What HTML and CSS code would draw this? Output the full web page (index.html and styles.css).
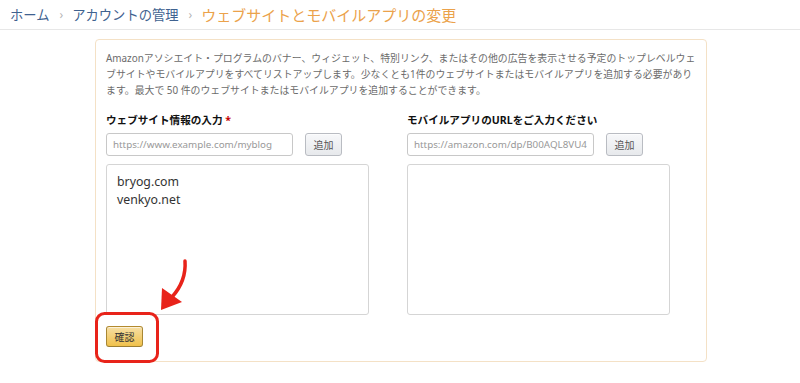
FILE: index.html
```html
<!DOCTYPE html>
<html lang="ja">
<head>
    <meta charset="UTF-8">
    <meta name="viewport" content="width=device-width, initial-scale=1.0">
    <title>ウェブサイトとモバイルアプリの変更</title>
    <link rel="stylesheet" href="styles.css">
</head>
<body>

<div class="breadcrumb">
    <a class="crumb" href="#">ホーム</a>
    <span class="sep">›</span>
    <a class="crumb" href="#">アカウントの管理</a>
    <span class="sep">›</span>
    <span class="crumb current">ウェブサイトとモバイルアプリの変更</span>
</div>

<div class="panel">
    <p class="desc">Amazonアソシエイト・プログラムのバナー、ウィジェット、特別リンク、またはその他の広告を表示させる予定のトップレベルウェブサイトやモバイルアプリをすべてリストアップします。少なくとも1件のウェブサイトまたはモバイルアプリを追加する必要があります。最大で 50 件のウェブサイトまたはモバイルアプリを追加することができます。</p>

    <div class="columns">
        <div class="column">
            <div class="label">ウェブサイト情報の入力 <span class="req">*</span></div>
            <div class="add-row">
                <input type="text" class="url-input" placeholder="https://www.example.com/myblog">
                <button class="btn">追加</button>
            </div>
            <div class="site-list">
                <div class="site">bryog.com</div>
                <div class="site">venkyo.net</div>
            </div>
        </div>
        <div class="column">
            <div class="label">モバイルアプリのURLをご入力ください</div>
            <div class="add-row">
                <input type="text" class="url-input" placeholder="https://amazon.com/dp/B00AQL8VU4">
                <button class="btn">追加</button>
            </div>
            <div class="site-list"></div>
        </div>
    </div>

    <button class="btn btn-primary">確認</button>
</div>

<!-- annotation drawn over the page -->
<svg class="annotation" width="800" height="383" viewBox="0 0 800 383">
    <rect x="96.5" y="313.5" width="61" height="48" rx="8" fill="none" stroke="#e8231a" stroke-width="3"/>
    <path d="M185 261 C186 275 181 287 172 297" fill="none" stroke="#e8231a" stroke-width="3.5" stroke-linecap="round"/>
    <polygon points="161,310 162,288 182,302" fill="#e8231a"/>
</svg>

</body>
</html>
```

FILE: styles.css
```css
body {
    margin: 0;
    font-family: "Noto Sans", "Noto Sans CJK JP", sans-serif;
    background-color: #fff;
    color: #333;
    position: relative;
    height: 383px;
    overflow: hidden;
}
.breadcrumb {
    height: 29px;
    padding-left: 10px;
    border-bottom: 1px solid #e7e7e7;
    display: flex;
    align-items: center;
    font-size: 13.3px;
}
.crumb {
    color: #3f6290;
    text-decoration: none;
}
.crumb.current {
    color: #eba24b;
    font-size: 15px;
}
.sep {
    color: #b5b5b5;
    font-size: 12px;
    margin: 0 9px 0 10px;
}
.panel {
    width: 594px;
    margin: 9px 0 0 95px;
    padding: 10px 6px 14px 10px;
    border: 1px solid #f4e1c6;
    border-radius: 4px;
}
.desc {
    margin: 0;
    font-size: 9.9px;
    line-height: 16px;
    color: #6b6b6b;
}
.columns {
    display: grid;
    grid-template-columns: 301px 1fr;
    margin-top: 15px;
}
.label {
    font-size: 10.6px;
    font-weight: bold;
    line-height: 14px;
    color: #111;
}
.req {
    color: #c40000;
}
.add-row {
    display: flex;
    align-items: center;
    gap: 12px;
    margin-top: 6px;
}
.url-input {
    width: 187px;
    height: 23px;
    box-sizing: border-box;
    border: 1px solid #c8c8c8;
    border-radius: 3px;
    padding: 0 6px;
    font-family: inherit;
    font-size: 9.8px;
}
.url-input::placeholder {
    color: #999;
}
.btn {
    width: 37px;
    height: 23px;
    padding: 0;
    font-family: inherit;
    font-size: 10px;
    color: #555;
    border: 1px solid #b9bcc2;
    border-radius: 3px;
    background: linear-gradient(#f7f8fa, #e7e9ec);
    box-shadow: 0 1px 0 rgba(255, 255, 255, 0.6) inset;
    cursor: pointer;
}
.site-list {
    width: 263px;
    height: 151px;
    box-sizing: border-box;
    margin-top: 8px;
    padding: 8px 10px;
    border: 1px solid #d5d5d5;
    border-radius: 3px;
    font-size: 12.3px;
    line-height: 18px;
    color: #333;
}
.btn-primary {
    display: block;
    margin-top: 11px;
    height: 21px;
    color: #333;
    border-color: #b38a2e #a88734 #9c7e31;
    background: linear-gradient(#f7dfa5, #f0c14b);
}
.annotation {
    position: absolute;
    left: 0;
    top: 0;
    pointer-events: none;
}
```
